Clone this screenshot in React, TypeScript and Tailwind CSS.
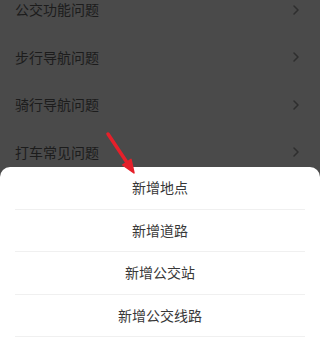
import React from 'react';

const helpRows = ['公交功能问题', '步行导航问题', '骑行导航问题', '打车常见问题'];
const actions = ['新增地点', '新增道路', '新增公交站', '新增公交线路'];

const font = { fontFamily: '"Noto Sans CJK SC", "Noto Sans", sans-serif' };

const Chevron = () => (
    <svg width={8} height={12} viewBox="0 0 8 12" className="text-[#2e2e2e]">
        <path d="M 2 2 L 6 6 L 2 10" fill="none" stroke="currentColor" strokeWidth={1.5} strokeLinecap="round" strokeLinejoin="round" />
    </svg>
);

export default function App() {
    return (
        <div className="relative w-[320px] h-[338px] overflow-hidden bg-[#4a4a4a]" style={font}>
            {/* dimmed help list behind the sheet */}
            <div className="flex flex-col mt-[-14px]">
                {helpRows.map((label) => (
                    <div key={label} className="flex items-center justify-between h-[47.5px] pl-[15px] pr-[20px]">
                        <span className="text-[14px] text-[#1c1c1c]">{label}</span>
                        <Chevron />
                    </div>
                ))}
            </div>

            {/* bottom action sheet */}
            <div className="absolute left-0 right-0 bottom-0 h-[171px] bg-white rounded-t-[10px]">
                {actions.map((label) => (
                    <div key={label} className="mx-[15px] h-[42.5px] flex items-center justify-center border-b border-[#f0f0f0]">
                        <span className="text-[14px] text-[#383838]">{label}</span>
                    </div>
                ))}
            </div>

            {/* red annotation arrow, drawn over the sheet edge */}
            <svg width={40} height={48} viewBox="0 0 40 48" className="absolute left-[100px] top-[128px]">
                <line x1={8} y1={6} x2={28} y2={36} stroke="#e5202a" strokeWidth={3.5} strokeLinecap="round" />
                <polygon points="34,45 22.6,37 31,31.4" fill="#e5202a" stroke="#e5202a" strokeWidth={1.5} strokeLinejoin="round" />
            </svg>
        </div>
    );
}
